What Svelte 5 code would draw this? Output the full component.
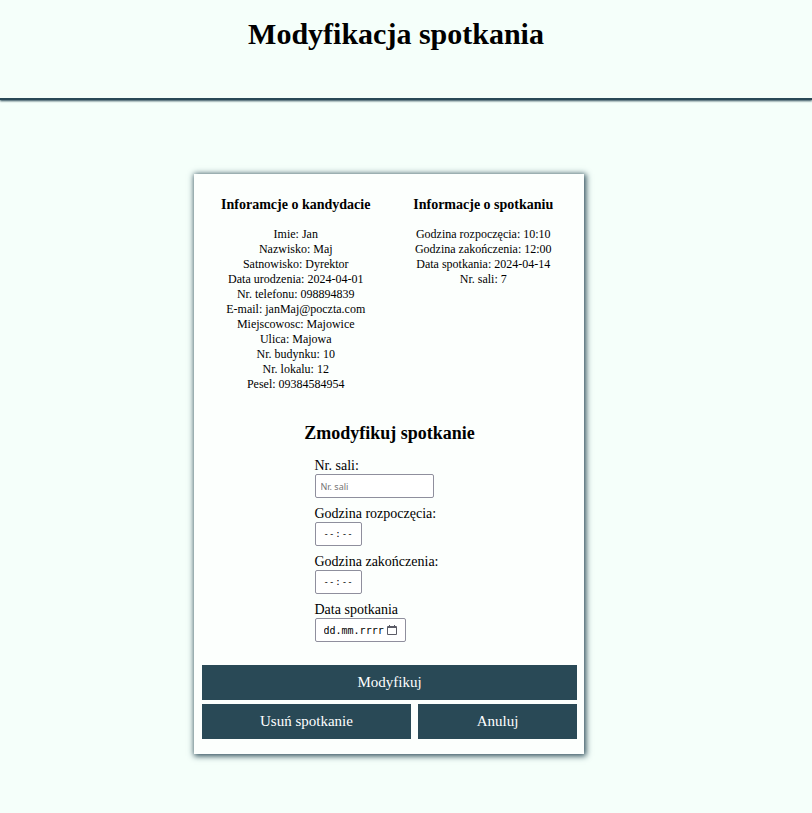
<script>
  const candidate = [
    ['Imie', 'Jan'],
    ['Nazwisko', 'Maj'],
    ['Satnowisko', 'Dyrektor'],
    ['Data urodzenia', '2024-04-01'],
    ['Nr. telefonu', '098894839'],
    ['E-mail', 'janMaj@poczta.com'],
    ['Miejscowosc', 'Majowice'],
    ['Ulica', 'Majowa'],
    ['Nr. budynku', '10'],
    ['Nr. lokalu', '12'],
    ['Pesel', '09384584954']
  ];
  const meeting = [
    ['Godzina rozpoczęcia', '10:10'],
    ['Godzina zakończenia', '12:00'],
    ['Data spotkania', '2024-04-14'],
    ['Nr. sali', '7']
  ];
</script>

<header>
  <h1>Modyfikacja spotkania</h1>
</header>

<main>
  <form class="card">
    <div class="info">
      <section>
        <h3>Inforamcje o kandydacie</h3>
        {#each candidate as [name, value]}
          <p>{name}: {value}</p>
        {/each}
      </section>
      <section>
        <h3>Informacje o spotkaniu</h3>
        {#each meeting as [name, value]}
          <p>{name}: {value}</p>
        {/each}
      </section>
    </div>

    <h2>Zmodyfikuj spotkanie</h2>

    <div class="fields">
      <label for="room">Nr. sali:</label>
      <input id="room" type="text" placeholder="Nr. sali" />
      <label for="start">Godzina rozpoczęcia:</label>
      <input id="start" class="time" type="time" />
      <label for="end">Godzina zakończenia:</label>
      <input id="end" class="time" type="time" />
      <label for="date">Data spotkania</label>
      <div class="date">
        <input id="date" type="text" placeholder="dd.mm.rrrr" />
        <button type="button" class="picker" aria-label="Kalendarz">
          <svg viewBox="0 0 10 10" width="10" height="10">
            <path
              fill="#5b5b66"
              fill-rule="evenodd"
              d="M2 0h1v1h4V0h1v1h1a1 1 0 0 1 1 1v7a1 1 0 0 1-1 1H1a1 1 0 0 1-1-1V2a1 1 0 0 1 1-1h1zM1 3v6h8V3z"
            />
          </svg>
        </button>
      </div>
    </div>

    <div class="actions">
      <button type="button" class="action">Modyfikuj</button>
      <div class="row">
        <button type="button" class="action remove">Usuń spotkanie</button>
        <button type="button" class="action cancel">Anuluj</button>
      </div>
    </div>
  </form>
</main>

<style>
  :global(body) {
    margin: 0;
    background: #f5fffa;
    color: #000;
    font-family: "Liberation Serif", "Times New Roman", serif;
  }

  header {
    padding: 16px 20px 46px 0;
    border-bottom: 2px solid #294956;
    box-shadow: 0 1px 2px #294956;
    text-align: center;
  }

  h1 {
    margin: 0;
    font-size: 30px;
    line-height: 36px;
  }

  main {
    display: flex;
    justify-content: center;
    padding: 74px 34px 32px 0;
  }

  .card {
    box-sizing: border-box;
    width: 390px;
    padding: 22px 7px 15px 8px;
    background: #fcfffd;
    box-shadow: 1px 1px 6px 1px #294956;
  }

  .info {
    display: grid;
    grid-template-columns: 1fr 1fr;
    text-align: center;
  }

  h3 {
    margin: 0 0 14px;
    font-size: 14px;
    line-height: 17px;
  }

  p {
    margin: 0;
    font-size: 12px;
    line-height: 15px;
  }

  h2 {
    margin: 30px 0 14px;
    font-size: 18px;
    line-height: 22px;
    text-align: center;
  }

  .fields {
    display: flex;
    flex-direction: column;
    align-items: flex-start;
    width: 150px;
    margin: 0 auto;
  }

  label {
    font-size: 14px;
    line-height: 16px;
    white-space: nowrap;
  }

  input {
    box-sizing: border-box;
    width: 119px;
    height: 24px;
    margin: 0 0 8px;
    padding: 0 5px;
    border: 1px solid #8f8f9d;
    border-radius: 2px;
    background: #fff;
    font-family: "Noto Sans", sans-serif;
    font-size: 9px;
  }

  input::placeholder {
    color: #757575;
    opacity: 1;
  }

  .time,
  .date input {
    padding: 0 8px;
    font-family: "DejaVu Sans Mono", monospace;
    font-size: 10px;
  }

  .time {
    width: 47px;
    font-size: 9px;
  }

  .time::-webkit-datetime-edit-text {
    padding: 0 1px;
  }

  .time::-webkit-datetime-edit-hour-field,
  .time::-webkit-datetime-edit-minute-field {
    padding: 0;
  }

  .time::-webkit-datetime-edit-ampm-field,
  .time::-webkit-calendar-picker-indicator {
    display: none;
  }

  .date input::placeholder {
    color: #000;
  }

  .date {
    position: relative;
  }

  .date input {
    display: block;
    width: 91px;
  }

  .picker {
    position: absolute;
    top: 7px;
    right: 9px;
    display: flex;
    padding: 0;
    border: 0;
    background: none;
  }

  .actions {
    display: flex;
    flex-direction: column;
    gap: 4px;
    margin-top: 15px;
  }

  .row {
    display: flex;
    gap: 7px;
  }

  .action {
    height: 35px;
    padding: 0;
    border: 0;
    background: #294956;
    color: #fff;
    font-family: inherit;
    font-size: 15px;
  }

  .remove {
    flex: 209;
  }

  .cancel {
    flex: 159;
  }
</style>
